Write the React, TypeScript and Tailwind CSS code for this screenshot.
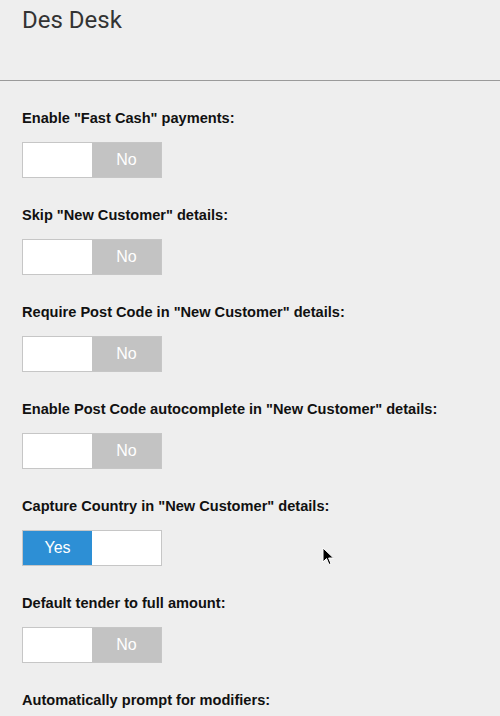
import React from "react";

const items: { label: string; on: boolean }[] = [
  { label: 'Enable "Fast Cash" payments:', on: false },
  { label: 'Skip "New Customer" details:', on: false },
  { label: 'Require Post Code in "New Customer" details:', on: false },
  { label: 'Enable Post Code autocomplete in "New Customer" details:', on: false },
  { label: 'Capture Country in "New Customer" details:', on: true },
  { label: "Default tender to full amount:", on: false },
  { label: "Automatically prompt for modifiers:", on: false },
];

const sans = { fontFamily: "'Liberation Sans', Arial, sans-serif" };

function Toggle({ on }: { on: boolean }) {
  return (
    <div className="flex w-[140px] h-[36px] border border-[#c6c6c6] bg-white" style={sans}>
      {on ? (
        <>
          <div className="w-[69px] h-full bg-[#2d8fd5] flex items-center justify-center text-white text-[16px]">Yes</div>
          <div className="flex-1 bg-white" />
        </>
      ) : (
        <>
          <div className="w-[69px] h-full bg-white" />
          <div className="flex-1 bg-[#c3c3c3] flex items-center justify-center text-white text-[16px]">No</div>
        </>
      )}
    </div>
  );
}

export default function App() {
  return (
    <div className="relative w-[500px] h-[716px] overflow-hidden bg-[#eeeeee] text-[#111]">
      <div className="h-[81px] border-b border-[#9a9a9a] px-[22px] pt-[4px]">
        <h1
          className="text-[24px] leading-[32px] text-[#333]"
          style={{ fontFamily: "Roboto, 'Liberation Sans', Arial, sans-serif" }}
        >
          Des Desk
        </h1>
      </div>
      <div className="px-[22px] pt-[27px] flex flex-col" style={sans}>
        {items.map((it, i) => (
          <div key={i} className="flex flex-col h-[97px]">
            <div className="text-[14.6px] font-bold leading-[20px] text-[#111] whitespace-nowrap">{it.label}</div>
            <div className="mt-[14px]">
              <Toggle on={it.on} />
            </div>
          </div>
        ))}
      </div>
      <svg className="absolute left-[322px] top-[547px]" width="14" height="20" viewBox="0 0 14 20">
        <path d="M1 1 L1 15 L4.5 11.5 L7 17.5 L9 16.6 L6.6 11 L11.5 11 Z" fill="#000" stroke="#fff" strokeWidth="1" />
      </svg>
    </div>
  );
}
